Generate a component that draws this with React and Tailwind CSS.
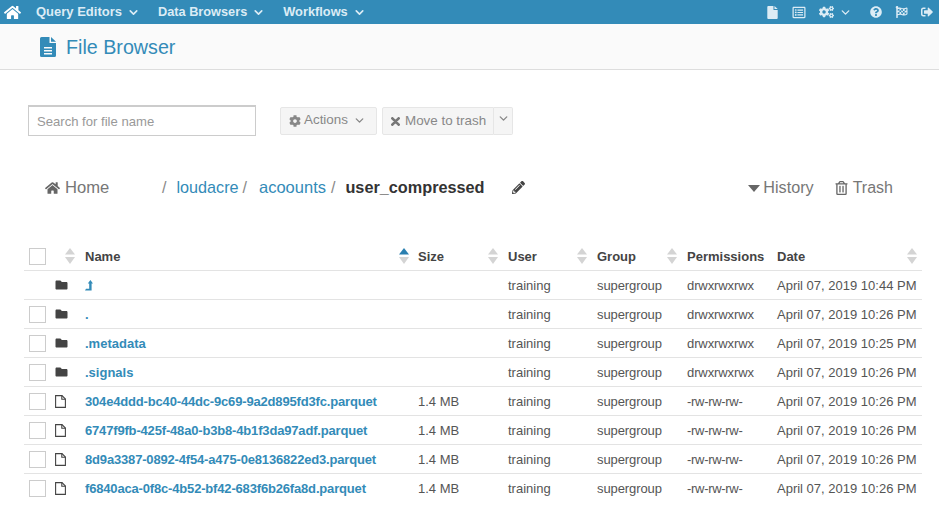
import React from "react";
import {
	FaHome,
	FaRegListAlt,
	FaCogs,
	FaCog,
	FaQuestionCircle,
	FaFlagCheckered,
	FaSignOutAlt,
	FaPencilAlt,
	FaRegTrashAlt,
	FaFolder,
} from "react-icons/fa";
import { ChevronDown } from "lucide-react";

const rows = [
	{ name: "up", folder: true, user: "training", perm: "drwxrwxrwx", date: "April 07, 2019 10:44 PM", noCheck: true },
	{ name: ".", folder: true, user: "training", perm: "drwxrwxrwx", date: "April 07, 2019 10:26 PM" },
	{ name: ".metadata", folder: true, user: "training", perm: "drwxrwxrwx", date: "April 07, 2019 10:25 PM" },
	{ name: ".signals", folder: true, user: "training", perm: "drwxrwxrwx", date: "April 07, 2019 10:26 PM" },
	{ name: "304e4ddd-bc40-44dc-9c69-9a2d895fd3fc.parquet", size: "1.4 MB", user: "training", perm: "-rw-rw-rw-", date: "April 07, 2019 10:26 PM" },
	{ name: "6747f9fb-425f-48a0-b3b8-4b1f3da97adf.parquet", size: "1.4 MB", user: "training", perm: "-rw-rw-rw-", date: "April 07, 2019 10:26 PM" },
	{ name: "8d9a3387-0892-4f54-a475-0e8136822ed3.parquet", size: "1.4 MB", user: "training", perm: "-rw-rw-rw-", date: "April 07, 2019 10:26 PM" },
	{ name: "f6840aca-0f8c-4b52-bf42-683f6b26fa8d.parquet", size: "1.4 MB", user: "training", perm: "-rw-rw-rw-", date: "April 07, 2019 10:26 PM" },
];

function SortArrows({ active }) {
	return (
		<svg width="10" height="16" viewBox="0 0 10 16" className="shrink-0">
			<path d="M5 0 L10 6.5 L0 6.5 Z" fill={active ? "#2a7fb0" : "#d4d4d4"} />
			<path d="M5 16 L10 9 L0 9 Z" fill="#d4d4d4" />
		</svg>
	);
}

function Checkbox() {
	return <div className="w-[17px] h-[17px] border border-[#ccc] bg-white ml-[5px]" />;
}

// solid page with folded corner, lines optional
function FileSolid({ lines, className }) {
	return (
		<svg viewBox="0 0 16 20" className={className} fill="currentColor">
			<path d="M1.5 0 H9.5 V6 H16 V18.5 A1.5 1.5 0 0 1 14.5 20 H1.5 A1.5 1.5 0 0 1 0 18.5 V1.5 A1.5 1.5 0 0 1 1.5 0 Z" />
			<path d="M11 0 L16 4.8 H11 Z" />
			{lines && <path d="M4 10 H12 V11.5 H4 Z M4 13 H12 V14.5 H4 Z M4 16 H12 V17.5 H4 Z" fill="#fafafa" />}
		</svg>
	);
}

function FileOutline() {
	return (
		<svg viewBox="0 0 11 13" className="ml-[3px] w-[11px] h-[13px]" fill="none" stroke="#444" strokeWidth="1.1">
			<path d="M0.6 0.6 H7 L10.4 4 V12.4 H0.6 Z" />
			<path d="M6.8 0.6 V4.2 H10.4" />
		</svg>
	);
}

function LevelUp() {
	return (
		<svg viewBox="0 0 8 11" className="block w-2 h-[11px] mt-[-1px]" fill="currentColor">
			<path d="M5.4 0 L8 3.6 H6.6 V10.5 H0 L1 8.8 H4.2 V3.6 H2.8 Z" />
		</svg>
	);
}

function CrossIcon() {
	return (
		<svg viewBox="0 0 10 10" className="w-[9px] h-[9px] text-[#777]" stroke="currentColor" strokeWidth="3" strokeLinecap="round">
			<path d="M1.5 1.5 L8.5 8.5 M8.5 1.5 L1.5 8.5" />
		</svg>
	);
}

function HeadCell({ label, active, className }) {
	return (
		<th className={`p-0 pt-[2px] pl-[5px] font-bold text-left text-[#444] ${className}`}>
			<div className="flex items-center justify-between">
				<span>{label}</span>
				<SortArrows active={active} />
			</div>
		</th>
	);
}

export default function App() {
	return (
		<div className="w-[939px] h-[515px] overflow-hidden bg-white font-['Liberation_Sans',Arial,sans-serif] text-[13px] text-[#555]">
			{/* top nav */}
			<div className="h-6 bg-[#338bb8] flex items-center text-[#dcecf5] font-bold">
				<FaHome className="ml-1 text-white w-[17px] h-[17px]" />
				<div className="flex items-center ml-[15px]">
					Query Editors
					<ChevronDown size={13} strokeWidth={3} className="ml-[5px]" />
				</div>
				<div className="flex items-center ml-[18px] text-[12.75px]">
					Data Browsers
					<ChevronDown size={13} strokeWidth={3} className="ml-[5px]" />
				</div>
				<div className="flex items-center ml-[18px] text-[12.8px]">
					Workflows
					<ChevronDown size={13} strokeWidth={3} className="ml-[5px]" />
				</div>
				<div className="ml-auto flex items-center">
					<FileSolid className="w-[11px] h-[13px]" />
					<FaRegListAlt className="w-[14px] h-[13px] ml-[14px]" />
					<FaCogs className="w-[15px] h-[14px] ml-[13px]" />
					<ChevronDown size={13} strokeWidth={2.5} className="ml-[5px]" />
					<FaQuestionCircle className="w-3 h-3 ml-[18px]" />
					<FaFlagCheckered className="w-[13px] h-3 ml-[13px]" />
					<FaSignOutAlt className="w-3 h-3 ml-[13px] mr-[6px]" />
				</div>
			</div>

			{/* page title */}
			<div className="h-[46px] bg-[#fafafa] border-b border-[#ddd] flex items-center pl-[40px] text-[#338bb8]">
				<FileSolid lines className="w-4 h-5" />
				<span className="ml-[10px] pt-[2px] text-[19.7px]">File Browser</span>
			</div>

			{/* search + actions */}
			<div className="flex items-center mt-[35px] ml-[28px]">
				<div className="w-[228px] h-[31px] border border-[#ccc] border-t-2 flex items-center pl-2 pt-[1px] text-[13.1px] text-[#999]">
					Search for file name
				</div>
				<div className="ml-6 w-[97px] h-7 bg-[#f5f5f5] border border-[#e6e6e6] rounded-[2px] flex items-center pl-2 text-[13.4px] text-[#888]">
					<FaCog className="w-3 h-3" />
					<span className="ml-[3px]">Actions</span>
					<ChevronDown size={13} strokeWidth={2.5} className="ml-[5px]" />
				</div>
				<div className="ml-[5px] h-7 w-[112px] bg-[#f5f5f5] border border-[#e6e6e6] rounded-l-[2px] flex items-center pl-2 pt-[2px] text-[13.4px] text-[#888]">
					<CrossIcon />
					<span className="ml-[5px]">Move to trash</span>
				</div>
				<div className="h-7 w-[19px] bg-[#f5f5f5] border border-l-0 border-[#e6e6e6] rounded-r-[2px] flex items-start justify-center pt-[4px] text-[#888]">
					<ChevronDown size={13} strokeWidth={2.5} />
				</div>
			</div>

			{/* breadcrumb */}
			<div className="flex items-center mt-[42px] h-5 pl-[45px] pr-[46px] text-[16px] leading-5">
				<FaHome className="w-[15px] h-[14px] text-[#666]" />
				<span className="ml-[5px] w-[97px] text-[16.6px] text-[#777]">Home</span>
				<span className="text-[#888]">/</span>
				<span className="ml-[10px] mb-[2px] text-[16.2px] text-[#338bb8]">loudacre</span>
				<span className="ml-[4px] text-[#888]">/</span>
				<span className="ml-[12px] mb-[2px] text-[16.5px] text-[#338bb8]">acoounts</span>
				<span className="ml-[5px] text-[#888]">/</span>
				<span className="ml-[10px] mb-[2px] text-[16.25px] font-bold text-[#333]">user_compressed</span>
				<FaPencilAlt className="ml-[27px] mb-[2px] w-[13px] h-[13px] text-[#444]" />
				<div className="ml-auto flex items-center text-[#777]">
					<svg width="12" height="7" viewBox="0 0 12 7" className="text-[#666]">
						<path d="M0 0 H12 L6 7 Z" fill="currentColor" />
					</svg>
					<span className="ml-[3px] mb-[2px] text-[16.2px]">History</span>
					<FaRegTrashAlt className="ml-[21px] w-[13px] h-[14px] text-[#666]" />
					<span className="ml-[5px]">Trash</span>
				</div>
			</div>

			{/* file table */}
			<table className="table-fixed border-collapse w-[898px] ml-6 mt-[43px]">
				<colgroup>
					<col className="w-[28px]" />
					<col className="w-[28px]" />
					<col className="w-[333px]" />
					<col className="w-[90px]" />
					<col className="w-[89px]" />
					<col className="w-[90px]" />
					<col className="w-[90px]" />
					<col className="w-[150px]" />
				</colgroup>
				<thead>
					<tr className="h-[29px] border-b border-[#e3e3e3]">
						<th className="p-0 pt-[2px]">
							<Checkbox />
						</th>
						<th className="p-0 pt-[2px]">
							<div className="flex justify-end pr-[5px]">
								<SortArrows />
							</div>
						</th>
						<HeadCell label="Name" active className="pr-[4px]" />
						<HeadCell label="Size" className="pr-[5px]" />
						<HeadCell label="User" className="pr-[5px]" />
						<HeadCell label="Group" className="pr-[5px]" />
						<th className="p-0 pt-[2px] pl-[5px] font-bold text-left text-[#444]">Permissions</th>
						<HeadCell label="Date" className="pr-[5px]" />
					</tr>
				</thead>
				<tbody>
					{rows.map((row, i) => (
						<tr key={i} className={`h-[29px] ${i < rows.length - 1 ? "border-b border-[#e3e3e3]" : ""}`}>
							<td className="p-0 pt-[2px]">{!row.noCheck && <Checkbox />}</td>
							<td className="p-0 pt-[2px]">
								{row.folder ? <FaFolder className="ml-[3px] mt-[-2px] w-[13px] h-3 text-[#444]" /> : <FileOutline />}
							</td>
							<td className={`p-0 pt-[2px] pl-[5px] font-bold text-[#338bb8] ${row.size ? "tracking-[-0.17px]" : ""}`}>
								{row.name === "up" ? <LevelUp /> : row.name}
							</td>
							<td className="p-0 pt-[2px] pl-[5px]">{row.size}</td>
							<td className="p-0 pt-[2px] pl-[5px]">{row.user}</td>
							<td className="p-0 pt-[2px] pl-[5px] tracking-[-0.1px]">supergroup</td>
							<td className={`p-0 pt-[2px] pl-[5px] ${row.folder ? "tracking-[-0.1px]" : "tracking-[-0.3px]"}`}>{row.perm}</td>
							<td className="p-0 pt-[2px] pl-[5px]">{row.date}</td>
						</tr>
					))}
				</tbody>
			</table>
		</div>
	);
}
